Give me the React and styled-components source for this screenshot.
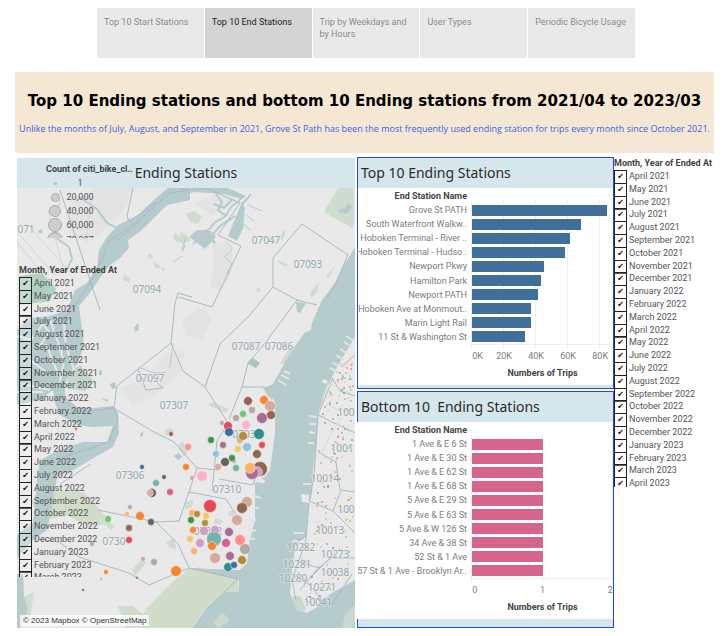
import React from "react";
import styled, { createGlobalStyle } from "styled-components";

const GlobalStyle = createGlobalStyle`
  * { box-sizing: border-box; }
  body {
    margin: 0;
    background: #fff;
    color: #333;
    font: 9px/13px Roboto, "Open Sans", sans-serif;
  }
  h1, h2, h3, p, ul { margin: 0; padding: 0; }
`;

const Page = styled.div`
  padding: 8px 9px 8px 15px;
`;

const Tabs = styled.nav`
  display: grid;
  grid-template-columns: repeat(5, minmax(0, 1fr));
  gap: 1px;
  max-width: 538px;
  height: 50px;
  margin: 0 auto 14px 82px;
`;

const Tab = styled.button`
  display: flex;
  align-items: flex-start;
  padding: 8px 6px 6px 7px;
  border: 0;
  background: ${(p) => (p.$active ? "#d4d4d4" : "#e9e9e9")};
  color: ${(p) => (p.$active ? "#222" : "#8b8b8b")};
  font: inherit;
  line-height: 12px;
  text-align: left;
  cursor: pointer;
`;

const Banner = styled.header`
  height: 81px;
  padding-top: 19px;
  background: #f4e7d4;
  text-align: center;
  white-space: nowrap;
`;

const BannerTitle = styled.h1`
  color: #000;
  font: bold 15px/20px "DejaVu Sans", sans-serif;
`;

const BannerText = styled.p`
  margin-top: 10px;
  color: #3f5fe2;
  font: 9px/16px "Open Sans", sans-serif;
`;

const Dashboard = styled.main`
  display: grid;
  grid-template-columns: minmax(0, 340fr) minmax(0, 257fr) 100px;
  margin: 4px 0 0 2px;
`;

const MapSheet = styled.section`
  position: relative;
  display: flex;
  flex-direction: column;
  margin: 1px 2px 0 0;
`;

const SheetTitle = styled.h2`
  padding: 0 3px;
  background: #d6e7eb;
  color: #2b2b2b;
  font: 14px/30px "Noto Sans", sans-serif;
  text-align: ${(p) => (p.$center ? "center" : "left")};
  white-space: pre;
`;

const MapArea = styled.div`
  position: relative;
  flex: 1;
  min-height: 440px;
  background: #e9e9e9;
`;

const MapDrawing = styled.svg`
  position: absolute;
  inset: 0;
  width: 100%;
  height: 100%;
`;

const Credit = styled.footer`
  position: absolute;
  left: 3px;
  bottom: 2px;
  padding: 0 3px;
  background: rgba(255, 255, 255, 0.75);
  font: 8px/11px "Liberation Sans", sans-serif;
`;

const CreditLink = styled.a`
  color: #333;
  text-decoration: none;
`;

const SizeLegend = styled.aside`
  position: absolute;
  top: 5px;
  left: 29px;
  height: 75px;
  overflow: hidden;
  color: #555;
`;

const SmallTitle = styled.h3`
  color: #444;
  font: bold 9px/13px Roboto, sans-serif;
  white-space: nowrap;
`;

const LegendRow = styled.div`
  display: grid;
  grid-template-columns: 18px 28px;
  align-items: center;
  gap: 2px;
  height: 14px;
  text-align: center;
`;

const LegendDot = styled.span`
  justify-self: center;
  width: ${(p) => p.$size}px;
  height: ${(p) => p.$size}px;
  border: 1px solid #aaa;
  border-radius: 50%;
  background: #cfcfcf;
`;

const MapFilter = styled.div`
  position: absolute;
  top: 106px;
  left: 2px;
  height: 313px;
  overflow: hidden;
`;

const SideFilter = styled.aside`
  height: 330px;
  overflow: hidden;
`;

const MonthList = styled.ul`
  display: grid;
  grid-template-rows: repeat(25, minmax(0, 1fr));
  height: 320px;
  list-style: none;
`;

const MonthLabel = styled.label`
  display: flex;
  align-items: center;
  gap: 2px;
  height: 100%;
  color: #555;
  white-space: nowrap;
`;

const Tick = styled.input`
  appearance: none;
  display: grid;
  place-items: center;
  flex: none;
  align-self: flex-start;
  width: 13px;
  height: 14px;
  margin: 0;
  border: 1px solid #222;
  background: rgba(255, 255, 255, 0.25);
  color: #111;
  font: 8px/10px "DejaVu Sans", sans-serif;
  &:checked::before { content: "✔"; }
`;

const Charts = styled.div`
  display: flex;
  flex-direction: column;
  gap: 2px;
`;

const Panel = styled.section`
  border: 1px solid #2348dc;
  background: #d6e7eb;
`;

const ChartBody = styled.div`
  margin-bottom: ${(p) => p.$foot}px;
  margin-left: ${(p) => (p.$wide ? -1 : 0)}px;
  padding: 2px 0 5px ${(p) => (p.$wide ? 1 : 0)}px;
  background: #fff;
`;

const Columns = styled.div`
  display: grid;
  grid-template-columns: 109px minmax(0, 1fr);
  column-gap: 5px;
`;

const ColumnTitle = styled(SmallTitle)`
  text-align: right;
`;

const Names = styled.div`
  display: grid;
  grid-template-rows: repeat(10, 1fr);
  justify-content: end;
  height: 142px;
  align-items: center;
  color: #7c7c7c;
`;

const Name = styled.span`
  text-align: right;
  white-space: nowrap;
`;

const Plot = styled.div`
  position: relative;
  display: grid;
  grid-template-rows: repeat(10, 1fr);
  align-items: center;
  border-bottom: 1px solid #eee;
`;

const GridLine = styled.i`
  position: absolute;
  top: -3px;
  bottom: -4px;
  left: ${(p) => p.$at}%;
  width: 1px;
  margin-left: -1px;
  background: #eee;
`;

const Bar = styled.div`
  position: relative;
  height: 11px;
  background: ${(p) => p.$color};
`;

const Axis = styled.div`
  position: relative;
  grid-column: 2;
  height: 22px;
  color: #7c7c7c;
`;

const AxisLabel = styled.span`
  position: absolute;
  top: 5px;
  left: ${(p) => p.$at}%;
  transform: translateX(-50%);
`;

const AxisTitle = styled(SmallTitle)`
  grid-column: 2;
  text-align: center;
`;

const tabs = [
  "Top 10 Start Stations",
  "Top 10 End Stations",
  "Trip by Weekdays and by Hours",
  "User Types",
  "Periodic Bicycle Usage",
];

const monthNames = [
  "January", "February", "March", "April", "May", "June",
  "July", "August", "September", "October", "November", "December",
];
const months = Array.from({ length: 25 }, (_, i) => {
  const n = i + 3;
  return `${monthNames[n % 12]} ${2021 + Math.floor(n / 12)}`;
});

const legend = [
  ["1", 3],
  ["20,000", 9],
  ["40,000", 12],
  ["60,000", 14],
  ["73,007", 16],
];

const topStations = [
  ["Grove St PATH", 84],
  ["South Waterfront Walkw..", 68],
  ["Hoboken Terminal - River ..", 61],
  ["Hoboken Terminal - Hudso..", 58],
  ["Newport Pkwy", 45],
  ["Hamilton Park", 43],
  ["Newport PATH", 41],
  ["Hoboken Ave at Monmout..", 37],
  ["Marin Light Rail", 37],
  ["11 St & Washington St", 33],
];

const bottomStations = [
  "1 Ave & E 6 St", "1 Ave & E 30 St", "1 Ave & E 62 St", "1 Ave & E 68 St",
  "5 Ave & E 29 St", "5 Ave & E 63 St", "5 Ave & W 126 St", "34 Ave & 38 St",
  "52 St & 1 Ave", "57 St & 1 Ave - Brooklyn Ar..",
].map((name) => [name, 1]);

const C = {
  brown: "#926653", orange: "#f98530", tan: "#d5a99c", gray: "#b5a7a4",
  lime: "#6ec771", purple: "#a86c97", pink: "#ffb1cc", red: "#e54a52",
  blue: "#3c6da2", olive: "#b38e32", teal: "#2c8f89", green: "#3a9649",
  yellow: "#f3c963", sky: "#8cc2e5", salmon: "#ff8e8c", dark: "#6c6160",
  aqua: "#72b4ad", peach: "#ffb26f", lilac: "#d49bc3", rose: "#d95e8c",
};

const stations = [
  [248, 401, 4, "brown"], [264, 400, 4, "orange"], [270, 406, 5, "tan"],
  [271, 415, 4, "brown"], [252, 410, 3, "gray"], [243, 414, 3, "lime"],
  [236, 418, 3, "gray"], [262, 418, 5, "purple"], [222, 423, 2, "gray"],
  [246, 425, 4, "pink"], [228, 426, 4, "red"], [229, 432, 4, "blue"],
  [240, 440, 3, "tan"], [243, 436, 4, "olive"], [259, 434, 5, "teal"],
  [211, 440, 3, "green"], [223, 445, 3, "purple"], [238, 449, 3, "yellow"],
  [247, 447, 4, "sky"], [262, 445, 3, "red"], [188, 447, 3, "salmon"],
  [216, 454, 3, "sky"], [257, 454, 4, "brown"], [234, 461, 2, "lilac"],
  [232, 458, 3, "green"], [225, 462, 4, "dark"], [186, 467, 3, "orange"],
  [218, 467, 3, "tan"], [236, 468, 3, "aqua"], [260, 469, 7, "brown"],
  [257, 472, 5, "lilac"], [252, 473, 6, "purple"], [250, 468, 5, "peach"],
  [192, 478, 2, "tan"], [202, 476, 5, "pink"], [210, 506, 6, "red"],
  [247, 502, 5, "tan"], [242, 508, 5, "brown"], [192, 513, 3, "peach"],
  [197, 514, 3, "olive"], [206, 516, 3, "yellow"], [191, 520, 3, "green"],
  [205, 523, 3, "olive"], [237, 520, 5, "tan"], [193, 530, 3, "orange"],
  [204, 531, 4, "lilac"], [215, 530, 4, "lilac"], [229, 532, 4, "purple"],
  [190, 539, 3, "yellow"], [200, 543, 4, "lilac"], [214, 539, 7, "aqua"],
  [212, 546, 4, "orange"], [226, 543, 4, "rose"], [240, 540, 5, "salmon"],
  [245, 549, 5, "gray"], [194, 551, 3, "peach"], [215, 558, 5, "tan"],
  [230, 556, 4, "purple"], [242, 560, 4, "olive"], [228, 567, 4, "teal"],
  [234, 565, 3, "blue"], [142, 467, 2, "blue"], [164, 477, 2, "dark"],
  [156, 483, 3, "aqua"], [152, 493, 4, "dark"], [150, 493, 3, "tan"],
  [170, 492, 3, "rose"], [130, 507, 2, "gray"], [127, 514, 2, "peach"],
  [140, 516, 4, "orange"], [108, 519, 3, "lime"], [151, 522, 3, "dark"],
  [129, 528, 3, "brown"], [129, 540, 3, "red"], [92, 544, 2, "gray"],
  [143, 559, 2, "lilac"], [154, 562, 3, "gray"], [106, 572, 2, "orange"],
  [176, 571, 5, "orange"], [83, 590, 1, "blue"], [137, 578, 1, "green"],
  [171, 434, 2, "brown"], [101, 579, 1, "sky"], [76, 429, 1, "red"],
];

const zips = [
  ["07047", 266, 244], ["07093", 308, 268], ["07094", 147, 293],
  ["07087", 246, 350], ["07086", 279, 350], ["07097", 150, 382],
  ["07307", 174, 409], ["07306", 130, 479], ["0730", 114, 545],
  ["0703", 244, 438], ["07310", 227, 493], ["07302", 208, 535],
  ["100", 346, 416], ["1001", 342, 452], ["10014", 325, 482],
  ["100", 346, 513], ["10013", 330, 534], ["10282", 301, 551],
  ["10273", 335, 558], ["10281", 297, 568], ["10280", 293, 582],
  ["10038", 335, 576], ["10271", 322, 591], ["10041", 318, 606],
  ["071", 26, 233],
];

// Small docks scattered over lower Manhattan, left edge following the shore.
const docks = (() => {
  const keys = Object.keys(C);
  let seed = 4127;
  const next = () => {
    seed = (seed * 16807) % 2147483647;
    return seed / 2147483647;
  };
  const out = [];
  while (out.length < 150) {
    const y = 362 + Math.floor(next() * 242);
    const left = y < 415 ? 340 - (y - 362) / 3 : y < 540 ? 322 - (y - 415) / 12 : 297 + (y - 540) / 6;
    const right = y < 582 ? 353 : 353 - (y - 582) * 2;
    if (right > left) {
      out.push([Math.round(left + next() * (right - left)), y, keys[Math.floor(next() * keys.length)]]);
    }
  }
  return out;
})();

function StationMap() {
  return (
    <MapDrawing viewBox="17 188 338 440" preserveAspectRatio="xMidYMid slice" role="img" aria-label="Map of ending stations">
      <rect x="17" y="188" width="338" height="440" fill="#e9e9e9" />
      <g fill="#dfdfdf">
        <path d="M70 200l30 -12 35 0 -12 25 -35 30 -20 -10z" opacity=".6" />
        <path d="M212 240l18 5 4 20 -12 26 -12 -4 4 -25z" opacity=".7" />
        <path d="M182 320l22 -14 8 14 -10 20 -16 -4z" opacity=".7" />
        <path d="M120 388l24 -10 20 -24 22 -4 -6 24 -26 22 -22 10z" opacity=".5" />
        <path d="M196 203l20 -10 14 -5 6 10 -24 18z" opacity=".7" />
      </g>
      <g fill="#d0dccd">
        <path d="M324 212l14 -24h16v36l-2 4z" />
        <path d="M30 500l24 -8 22 -2 10 4 26 30 -24 2 -20 -10 -26 4z" fill="#d2dcca" />
        <path d="M168 586l22 -18 48 11 1 13 -14 0 -16 15 -14 21h-60l12 -20z" fill="#d2dcca" />
        <path d="M18 600l16 -8 -4 26 -12 10z M118 606l14 0 20 14 14 8h-40z" />
        <path d="M186 214l8 -3 8 5 -4 8 -8 -2z M180 232l8 4 -4 6 -4 -2z M280 236l4 -6 2 2 -4 10z M278 260l10 4 -2 3 -8 -4z M258 287l3 3 -2 3 -3 -3z M310 293l9 -11 -2 10 -6 6z M326 276l10 -11 -8 14z" />
        <path d="M208 405l4 -3 17 7 -3 4z M280 364l8 -14 5 0 -4 14z M262 388l8 0 4 12 -6 -3z M182 441l6 10 -4 6 -6 -10z M103 518l12 8 -4 4 -8 -7z M132 570l8 -9 7 1 -12 14z M166 543l8 -6 2 12 -6 -1z M178 240l8 -4 5 4 -7 4z M165 430l6 -2 3 4 -8 4z" />
        <path d="M185 502l8 -2 -1 7 -7 2z M194 570l5 -3 6 2 -4 4z M229 511l6 0 -2 5 -5 0z M215 518l8 3 -3 4 -6 -2z M124 274l6 4 0 4 -7 -2z M149 253l4 3 -2 3 -4 -2z M154 262l6 4 -2 3 -4 -3z M161 267l4 2 -2 3z M175 232l6 6 -3 5 -5 -5z" />
      </g>
      <g fill="#b6cbcc">
        {/* Hackensack river and its bays */}
        <path d="M190 188L190 200L167 205L147 225L138 233L128 240L129 248L120 258L110 265L102 275L90 293L79 306L82 330L84 345L78 363L70 373L65 383L65 397L77 407L93 408L113 406L118 413L119 433L113 447L90 460L73 470L57 477L53 503L47 530L33 540L17 558L17 534L33 523L35 503L37 480L40 460L60 450L83 442L107 442L113 426L93 427L77 425L60 415L55 403L53 390L40 400L17 405L17 330L30 318L50 316L67 310L75 290L87 283L97 267L99 250L107 237L118 225L138 215L157 197L168 188Z" />
        <path d="M17 574h6l1 22 4 14 -8 18h-3z" />
        <path d="M180 190l18 -2h30l18 8 -4 3 -18 -5 -28 -2 -16 2z" />
        <path d="M228 236l14 -34 3 6 -2 20 -6 13z M191 238l6 -8 14 1 5 6 -11 12z" />
        {/* Hudson and the upper bay */}
        <path d="M355 247L343 267L335 283L322 300L312 323L297 343L285 362L273 384L264 388L270 394L275 402L275 433L270 470L266 476L255 483L255 520L250 540L247 563L240 570L210 569L190 568L239 580L239 592L225 592L209 607L194 628L355 628L355 580L330 594L317 607L307 613L297 610L290 593L292 570L295 547L306 537L308 510L312 493L313 470L316 443L318 413L327 387L337 367L355 337Z" />
        <path d="M337 210l8 -2 3 -5 4 4 -4 6 -7 1z M296 302l10 1 -6 10 -3 -1z" />
      </g>
      <path fill="#c6d6ca" d="M68 374l12 -9 14 16 -8 10 -19 -2z" />
      <path fill="#b3cfc0" d="M20 276l22 -3 14 16 -6 12 -30 4z" />
      <path fill="#a9c6bc" d="M248 362l5 -4 7 5 -4 5 -8 -4z" />
      <path fill="#b6cbcc" d="M134 328l4 -5 1 7 -4 2z M99 371l3 -1 0 5 -3 0z M101 398l8 2 -2 2z M110 384l5 -2 1 6 -4 1z M174 456l5 -3 3 4 -4 3z M140 434l3 -3 0 5 -2 1z M48 309l2 -2 1 4z M38 231l3 -2 2 3 -3 2z" />
      <path fill="#e9e9e9" d="M306 319l6 2 -1 9 -7 3z M301 494l9 1 0 8 -8 -1z M323 379l5 2 -2 3 -4 -2z M255 478l10 2 -1 3 -10 -1z" />
      <path fill="#cbd8cd" d="M213 623l8 -10 6 3 2 5 -10 7z M355 604l-10 11 -3 13h9l4 -5z M292 596l8 0 6 12 -2 4 -8 -3z" />
      {/* Wetland channels */}
      <g fill="none" stroke="#b6cbcc" strokeWidth="2">
        <path d="M79 197l18 12 10 14 8 4 3 2M55 237l14 10 3 12 -6 12M190 238c7 -12 16 -2 22 -12s12 -4 16 -14 10 -6 14 -16M193 244c6 -8 16 -2 22 -12s10 -8 20 -16M197 234l4 10 8 -8 6 7M216 194l6 8 -4 8 8 6M214 204l10 4 8 -8M242 204l6 -6 3 -4" />
        <path strokeWidth="1" d="M180 240l5 6 -3 6M186 236l-4 14M225 242c8 4 10 8 2 12 -6 6 6 4 4 12 -6 8 -2 10 -2 6M248 205l14 6M246 215l8 6M243 224l8 6M166 372c-14 4 -20 -4 -28 -4M174 262l8 -6M170 367l3 -24M139 372l4 8" />
      </g>
      {/* Salt-marsh islands and rail lines on the left bank */}
      <g fill="none" stroke="#e4e8e8" strokeWidth="2">
        <path d="M17 336l14 4 12 -16 6 8 -10 16M50 320l8 22 6 20 -4 20M64 324l2 22 8 24M22 384l28 6M17 392l26 0M46 344l12 30M30 360l16 12" />
      </g>
      <g fill="none" stroke="#cfd7d9" strokeWidth="1">
        <path d="M17 232l38 43M26 223l40 45M17 242l30 37M48 210l16 62M93 190l-7 50M60 200l-6 40" />
      </g>
      {/* Piers */}
      <g fill="none" stroke="#e0e6e2" strokeWidth="2">
        <path d="M278 380l8 5M281 375l8 4M284 371l6 3M346 336l8 5M344 342l8 5M340 349l8 5M336 355l8 5M332 362l8 5M330 368l6 3M309 416l8 1M309 424l7 0M309 432l6 1M308 443l6 0M303 484l8 0M252 495l9 3M253 508l6 0M246 520l10 0M248 532l8 -2M247 539l8 0M294 533l10 0M292 541l10 0" />
      </g>
      {/* Postal boundaries */}
      <g fill="none" stroke="#a9bbc2" strokeWidth="1">
        <path d="M180 189l28 0 32 14 -22 32 23 11 -29 61 -34 -10M273 258l29 -34 46 31 -14 32 -6 11M273 258l0 29 24 13 20 5M273 287l-24 29 -29 28 -15 43M297 300l-32 43 -17 20 -6 24 22 0 8 12M242 387l-13 32M227 425l-10 16 -5 50M205 387l23 36M171 343l-54 43 -3 22 38 23 22 11 23 26 20 2M171 343l4 -40 3 -10 14 4M171 343l12 28 22 16M114 408l-50 6M138 369l8 21 17 -2 -8 -8M118 240l19 -17M157 202l-28 20 -2 -6 6 -28M190 190l-20 3 -33 29 -28 19 -12 30 -23 36 -27 34M60 190l40 120M114 408l4 12 -10 22 -46 16" />
        <path d="M219 479l34 6 2 -6M197 468l-18 53 -23 1 -34 -7 -24 -5M189 492l37 7 9 14 5 12M156 522l22 22 11 24 49 11 -30 29 -14 20M189 568l-40 17 -20 -12 -50 -16 -20 -15 -30 -4M91 464l-31 20" />
        <path d="M341 367l14 -12M332 378l8 13 15 5M318 415l37 18M333 378l-15 37 -4 62 -5 24 24 10 8 -21 14 2M318 452l18 10 4 28M333 511l22 22M309 504l-3 36 -14 40 4 20M295 560l24 8 12 -10 24 0M300 590l20 -24M306 596l26 8 20 -30M298 572l28 32M304 584l26 -26" />
        <path stroke="#d3dcca" d="M350 393l-22 -10 -6 16 12 -4M322 452l10 -20 10 -14M326 404l12 6" />
      </g>
      <g>
        {docks.map(([x, y, c], i) => (
          <circle key={i} cx={x} cy={y} r="0.8" fill={C[c]} />
        ))}
      </g>
      <g fill="#97a9b2" stroke="#eceeee" strokeWidth="2" paintOrder="stroke" fontFamily="Noto Sans, sans-serif" fontSize="10" textAnchor="middle">
        {zips.map(([t, x, y], i) => (
          <text key={i} x={x} y={y} strokeOpacity="0.5">{t}</text>
        ))}
      </g>
      <g stroke="#f0eded" strokeWidth="0.5">
        {stations.map(([x, y, r, c], i) => (
          <circle key={i} cx={x} cy={y} r={r + 0.4} fill={C[c]} />
        ))}
      </g>
    </MapDrawing>
  );
}

function MonthFilter() {
  return (
    <>
      <SmallTitle>Month, Year of Ended At</SmallTitle>
      <MonthList>
        {months.map((m) => (
          <li key={m}>
            <MonthLabel>
              <Tick type="checkbox" defaultChecked />
              {m}
            </MonthLabel>
          </li>
        ))}
      </MonthList>
    </>
  );
}

function BarChart({ title, rows, max, ticks, color, foot, wide }) {
  return (
    <Panel>
      <SheetTitle>{title}</SheetTitle>
      <ChartBody $foot={foot} $wide={wide}>
        <Columns>
          <ColumnTitle>End Station Name</ColumnTitle>
        </Columns>
        <Columns>
          <Names>
            {rows.map(([name]) => (
              <Name key={name}>{name}</Name>
            ))}
          </Names>
          <Plot>
            {ticks.map(([label, value]) => (
              <GridLine key={label} $at={(value / max) * 100} />
            ))}
            {rows.map(([name, value]) => (
              <Bar key={name} $color={color} style={{ width: `${(value / max) * 100}%` }} />
            ))}
          </Plot>
          <Axis>
            {ticks.map(([label, value], i) => (
              <AxisLabel key={label} $at={i ? (value / max) * 100 - (i === 2 && wide ? 2 : 0) : wide ? 2 : 4}>
                {label}
              </AxisLabel>
            ))}
          </Axis>
          <AxisTitle>Numbers of Trips</AxisTitle>
        </Columns>
      </ChartBody>
    </Panel>
  );
}

export default function App() {
  const [active, setActive] = React.useState(1);
  return (
    <>
      <GlobalStyle />
      <Page>
        <Tabs>
          {tabs.map((t, i) => (
            <Tab key={t} type="button" $active={i === active} onClick={() => setActive(i)}>
              {t}
            </Tab>
          ))}
        </Tabs>
        <Banner>
          <BannerTitle>Top 10 Ending stations and bottom 10 Ending stations from 2021/04 to 2023/03</BannerTitle>
          <BannerText>
            Unlike the months of July, August, and September in 2021, Grove St Path has been the most frequently used
            ending station for trips every month since October 2021.
          </BannerText>
        </Banner>
        <Dashboard>
          <MapSheet>
            <SheetTitle $center>Ending Stations</SheetTitle>
            <MapArea>
              <StationMap />
              <Credit>
                <CreditLink href="#mapbox">© 2023 Mapbox</CreditLink>{" "}
                <CreditLink href="#osm">© OpenStreetMap</CreditLink>
              </Credit>
            </MapArea>
            <SizeLegend>
              <SmallTitle>Count of citi_bike_cl..</SmallTitle>
              {legend.map(([label, size]) => (
                <LegendRow key={label}>
                  <LegendDot $size={size} />
                  {label}
                </LegendRow>
              ))}
            </SizeLegend>
            <MapFilter>
              <MonthFilter />
            </MapFilter>
          </MapSheet>
          <Charts>
            <BarChart
              title="Top 10 Ending Stations"
              rows={topStations}
              max={88}
              ticks={[["0K", 0], ["20K", 20], ["40K", 40], ["60K", 60], ["80K", 80]]}
              color="#406f9b"
              foot={3}
            />
            <BarChart
              title="Bottom 10  Ending Stations"
              rows={bottomStations}
              max={2}
              ticks={[["0", 0], ["1", 1], ["2", 2]]}
              color="#d56689"
              foot={8}
              wide
            />
          </Charts>
          <SideFilter>
            <MonthFilter />
          </SideFilter>
        </Dashboard>
      </Page>
    </>
  );
}
